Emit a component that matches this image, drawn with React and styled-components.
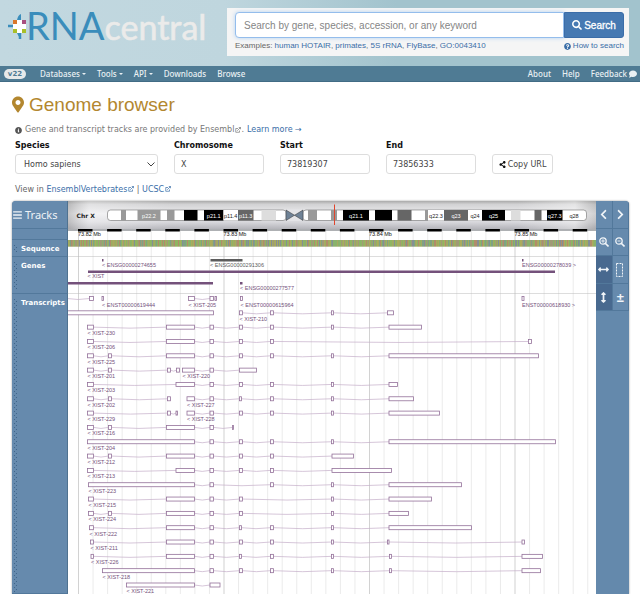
import React from "react";
import styled, { createGlobalStyle } from "styled-components";
import {
  FaSearch, FaQuestionCircle, FaInfoCircle, FaComment,
  FaMapMarkerAlt, FaShareAlt, FaBars, FaChevronLeft, FaChevronRight, FaArrowsAltH, FaArrowsAltV,
} from "react-icons/fa";

const GlobalStyle = createGlobalStyle`
  * { box-sizing: border-box; }
  body {
    margin: 0;
    background: #fff;
    color: #666;
    font-family: "DejaVu Sans", sans-serif;
    font-size: 8px;
  }
  a { color: #3a6ea8; text-decoration: none; }
`;

const sans = `"Liberation Sans", Arial, sans-serif`;

/* ---------- header ---------- */

const Header = styled.header`
  display: flex;
  justify-content: space-between;
  align-items: flex-start;
  height: 66px;
  padding: 8px 11px 0 7px;
  background: linear-gradient(90deg, #c2d8e0 0%, #bfd6de 35%, #a2c3cd 62%, #a2c3cd 100%);
`;

const Logo = styled.a`
  display: flex;
  align-items: flex-start;
  font-family: Lato, sans-serif;
  font-size: 38px;
  line-height: 34px;
  color: #3a8dbb;
`;

const LogoMark = styled.svg`
  width: 19px;
  height: 26px;
  margin-top: 5px;
`;

const LogoText = styled.span`
  white-space: nowrap;
`;

const Pale = styled.span`
  color: #ebebea;
  font-size: 34px;
  -webkit-text-stroke: 0.6px #ebebea;
`;

const SearchPanel = styled.form`
  width: 402px;
  height: 48px;
  padding: 4px 5px 0 8px;
  background: #f5f5f5;
  font-family: ${sans};
`;

const SearchBar = styled.div`
  display: flex;
  height: 26px;
`;

const SearchInput = styled.input`
  flex: 1;
  min-width: 0;
  padding: 0 8px;
  border: 1px solid #94bdec;
  border-radius: 4px 0 0 4px;
  box-shadow: 0 0 4px #b5d3f2;
  background: #fff;
  font: 10px ${sans};
  outline: none;
  &::placeholder { color: #858585; opacity: 1; }
`;

const SearchButton = styled.button`
  display: flex;
  align-items: center;
  justify-content: center;
  gap: 2px;
  width: 60px;
  padding: 0;
  border: 1px solid #3b6da8;
  border-radius: 0 3px 3px 0;
  background: #4679b2;
  color: #fff;
  font: 10px ${sans};
  -webkit-text-stroke: 0.3px #fff;
`;

const Examples = styled.div`
  display: flex;
  justify-content: space-between;
  margin-top: 3px;
  line-height: 10px;
  font-size: 8px;
`;

const IconLink = styled.a`
  display: flex;
  align-items: center;
  gap: 2px;
`;

const Nav = styled.nav`
  display: flex;
  align-items: center;
  height: 16px;
  padding: 0 3px 0 4px;
  background: #4f7b94;
  border-bottom: 1px solid #416c85;
  font-family: "Noto Sans", sans-serif;
`;

const Version = styled.a`
  width: 22px;
  margin-right: 14px;
  border-radius: 6px;
  background: #e6e9ea;
  color: #4f7b94;
  font: bold 7px/10px "DejaVu Sans", sans-serif;
  text-align: center;
`;

const NavLink = styled.a`
  display: flex;
  align-items: center;
  gap: 2px;
  margin-right: 11px;
  color: #e9f0f3;
  font-size: 8px;
  font-weight: 500;
  &:last-child { margin-right: 0; }
`;

const Caret = styled.i`
  border: 2px solid transparent;
  border-top-color: #e9f0f3;
  border-bottom: 0;
`;

const Spacer = styled.span`
  flex: 1;
`;

/* ---------- page ---------- */

const Page = styled.main`
  padding: 11px 11px 0 12px;
`;

const Title = styled.h1`
  display: flex;
  align-items: center;
  gap: 5px;
  margin: 0;
  color: #b3872f;
  font: 19px/23px ${sans};
  & svg { width: 12px; height: 17px; }
`;

const Info = styled.p`
  display: flex;
  align-items: center;
  margin: 9px 0 0 3px;
  line-height: 10px;
  color: #777;
  & > svg:first-child { margin-right: 3px; color: #555; }
  & > a { margin-left: 3px; }
`;

const ExtIcon = styled.svg`
  width: 6px;
  height: 6px;
  margin: 0 0 0 1px;
`;

const Form = styled.form`
  display: flex;
  align-items: flex-end;
  gap: 16px;
  margin: 6px 0 0 3px;
`;

const Field = styled.label`
  display: flex;
  flex-direction: column;
  gap: 3px;
  width: ${(p) => (p.$wide ? "143px" : "90px")};
  color: #111;
  font-weight: bold;
  line-height: 10px;
`;

const control = `
  height: 20px;
  width: 100%;
  border: 1px solid #ddd;
  border-radius: 3px;
  background: #fff;
  color: #444;
  font: 8px "DejaVu Sans", sans-serif;
`;

const Input = styled.input`
  ${control}
  padding: 0 6px;
`;

const SelectBox = styled.span`
  display: grid;
  align-items: center;
  & > * { grid-area: 1 / 1; }
  & > svg { justify-self: end; width: 8px; height: 5px; margin-right: 3px; pointer-events: none; }
`;

const Select = styled.select`
  ${control}
  appearance: none;
  padding: 0 8px;
`;

const CopyButton = styled.button`
  ${control}
  display: flex;
  align-items: center;
  justify-content: center;
  gap: 2px;
  width: 61px;
  padding: 0;
  white-space: nowrap;
  & svg { color: #111; }
`;

const ViewIn = styled.p`
  margin: 11px 0 0 3px;
  line-height: 10px;
`;

/* ---------- genome browser ---------- */

const Browser = styled.section`
  display: grid;
  grid-template-columns: 1fr 33px;
  margin-top: 6px;
  border-radius: 4px 4px 0 0;
  overflow: hidden;
  background: #6489ac;
  box-shadow: 0 0 2px #888;
`;

const Tracks = styled.div`
  min-width: 0;
`;

const TrackRow = styled.div`
  display: grid;
  grid-template-columns: 56px 1fr;
`;

const TrackLabel = styled.div`
  display: flex;
  padding: 5px 0 0 2px;
  border-bottom: 1px solid #52789b;
  border-right: 1px solid #4f7290;
  background: #668aad;
  color: #fff;
  font: bold 7px/8px "DejaVu Sans", sans-serif;
`;

const TracksButton = styled.button`
  display: flex;
  align-items: center;
  gap: 3px;
  padding: 0 0 0 1px;
  border: 0;
  border-right: 1px solid #4f7290;
  border-bottom: 1px solid #52789b;
  background: #668aad;
  color: #eef2f6;
  font: 11px "Noto Sans", sans-serif;
  & svg { width: 9px; height: 10px; }
`;

const Grip = styled.i`
  width: 4px;
  height: ${(p) => p.$h};
  margin-right: 3px;
  background:
    conic-gradient(from 0deg at 1px 1px, transparent 270deg, #3f658a 0) 0 0 / 4px 4px,
    conic-gradient(from 0deg at 1px 1px, transparent 270deg, #3f658a 0) 2px 2px / 4px 4px;
`;

const Chart = styled.svg`
  display: block;
  width: 100%;
  height: auto;
  background: #fff;
  font: 11px ${sans};
`;

const Toolbar = styled.div`
  display: grid;
  grid-template-columns: 1fr 1fr;
  grid-template-rows: 28px 27px 28px 27px;
`;

const Tool = styled.button`
  display: flex;
  align-items: center;
  justify-content: center;
  padding: 0;
  border: 0;
  border-right: 1px solid #52789b;
  border-bottom: 1px solid #52789b;
  background: ${(p) => (p.$active ? "#48698f" : "#668aad")};
  color: #f0f4f8;
  font: bold 13px ${sans};
`;

/* Chart units: two per pixel at the narrowest layout, 1056 across. */
const W = 1056;
const PURPLE = "#74517b";

const BANDS = [
  [106, 116, "#999"], [139, 185, "#999", "p22.2"], [198, 213, "#999"], [232, 259, "#000"],
  [272, 311, "#000", "p21.1"], [311, 340, "#fff", "p11.4"], [340, 371, "#666", "p11.3"],
  [387, 416, "#ddd"], [480, 498, "#999"], [526, 538, "#999"], [550, 602, "#000", "q21.1"],
  [614, 648, "#000"], [659, 687, "#666"], [714, 720, "#999"], [720, 752, "#fff", "q22.3"],
  [752, 800, "#666", "q23"], [800, 828, "#fff", "q24"], [828, 874, "#000", "q25"],
  [886, 905, "#ddd"], [933, 947, "#666"], [958, 989, "#000", "q27.3"], [990, 1034, "none", "q28"],
];

function Ideogram() {
  return (
    <Chart viewBox={`0 0 ${W} 56`} role="img" aria-label="Chromosome X">
      <defs>
        <linearGradient id="metal" x1="0" y1="0" x2="0" y2="1">
          <stop offset="0" stopColor="#aaa" />
          <stop offset="0.12" stopColor="#d2d2d4" />
          <stop offset="0.45" stopColor="#ececee" />
          <stop offset="0.75" stopColor="#d8d8dc" />
          <stop offset="1" stopColor="#b4b4ba" />
        </linearGradient>
        <linearGradient id="edge">
          <stop offset="0" stopColor="#999" stopOpacity="0.45" />
          <stop offset="0.04" stopColor="#fff" stopOpacity="0.35" />
          <stop offset="0.2" stopColor="#fff" stopOpacity="0" />
          <stop offset="0.85" stopColor="#fff" stopOpacity="0" />
          <stop offset="0.96" stopColor="#fff" stopOpacity="0.4" />
          <stop offset="1" stopColor="#999" stopOpacity="0.35" />
        </linearGradient>
      </defs>
      <rect width={W} height="56" fill="url(#metal)" />
      <rect width={W} height="56" fill="url(#edge)" />
      <text x="17" y="33" fontFamily="DejaVu Sans" fontWeight="bold" fontSize="12" fill="#222">Chr X</text>
      <rect x="79" y="18" width="357" height="21" rx="6" fill="#fff" stroke="#555" />
      <rect x="470" y="18" width="567" height="21" rx="6" fill="#fff" stroke="#555" />
      {BANDS.map(([a, b, fill, label]) => (
        <g key={a}>
          <rect x={a} y="18" width={b - a} height="21" fill={fill} />
          {label && (
            <text x={(a + b) / 2} y="33" textAnchor="middle" fill={fill === "#fff" || fill === "none" ? "#222" : "#fff"}>{label}</text>
          )}
        </g>
      ))}
      <rect x="435" y="17" width="36" height="23" fill="#e4e4e7" />
      <path d="M436 18 L453 28.5 L436 39Z M470 18 L453 28.5 L470 39Z" fill="#6f8296" stroke="#333" />
      <path d="M533 7V48" stroke="#e0452c" strokeWidth="2" />
    </Chart>
  );
}

function Grid({ height }) {
  return (
    <g>
      {Array.from({ length: 36 }, (_, i) => (
        <rect key={i} x={20 + i * 29.1} y="0" width="2" height={height} fill={i % 10 ? "#ebebeb" : "#d2d2d2"} />
      ))}
    </g>
  );
}

function Ruler() {
  return (
    <Chart viewBox={`0 0 ${W} 22`} role="img" aria-label="Position ruler">
      <Grid height={22} />
      <rect width={W} height="4" fill="#aeb0b3" />
      {Array.from({ length: 18 }, (_, i) => (
        <rect key={i} x={20 + i * 58.2} y="0" width="29" height="5" fill="#000" />
      ))}
      {["73.82 Mb", "73.83 Mb", "73.84 Mb", "73.85 Mb"].map((t, i) => (
        <text key={t} x={20 + i * 291} y="14" fill="#111">{t}</text>
      ))}
    </Chart>
  );
}

const BASE_COLORS = ["#8cb860", "#a7a960", "#b8846a", "#78a08c", "#9cae5f", "#b0ab5a", "#86b46b", "#a3967a", "#8088a0"];

function Sequence() {
  let seed = 7;
  const bars = Array.from({ length: 528 }, () => {
    seed = (seed * 16807) % 2147483647;
    return BASE_COLORS[seed % BASE_COLORS.length];
  });
  return (
    <Chart viewBox={`0 0 ${W} 34`} role="img" aria-label="Sequence">
      <Grid height={34} />
      <rect width={W} height="13" fill="#98a86a" />
      {bars.map((c, i) => <rect key={i} x={i * 2} y="0" width="2" height="13" fill={c} opacity="0.8" />)}
      <rect y="33" width={W} height="1" fill="#bbb" />
    </Chart>
  );
}

function Genes() {
  return (
    <Chart viewBox={`0 0 ${W} 74`} role="img" aria-label="Genes">
      <Grid height={74} />
      <g fill={PURPLE}>
        <rect x="68" y="4" width="3" height="5" />
        <text x="68" y="20">&lt; ENSG00000274655</text>
        <rect x="40" y="27" width="934" height="5" />
        <text x="39" y="42">&lt; XIST</text>
        <rect x="0" y="50" width="290" height="5" />
        <rect x="344" y="50" width="5" height="5" />
        <text x="344" y="65">&lt; ENSG00000277577</text>
        <rect x="908" y="4" width="3" height="5" />
        <text x="908" y="20">ENSG00000278039 &gt;</text>
      </g>
      <g fill="#5c5c5c">
        <rect x="285" y="4" width="64" height="5" />
        <text x="284" y="20">&lt; ENSG00000291306</text>
      </g>
      <rect y="73" width={W} height="1" fill="#bbb" />
    </Chart>
  );
}

const A = [39, 51], B = [81, 87], C = [197, 253], C2 = [216, 253], D = [284, 291], E = [343, 349], F = [405, 411], G = [527, 531];
const T = [199, 205];

/* Each transcript: row number, exons as [start, end], label. */
const TRANSCRIPTS = [
  [0, [[-9, -2], [43, 51]]],
  [0, [[68, 71]], "< ENST00000619444"],
  [0, [[241, 253], D, [294, 297]], "< XIST-205"],
  [0, [[345, 349]], "< ENST00000615964"],
  [0, [[908, 912]], "ENST00000618930 >"],
  [1, [[-9, 291]]],
  [1, [E, F, G, [639, 651]], "< XIST-210"],
  [2, [A, C, D, E, F, G, [642, 707]], "< XIST-230"],
  [3, [A, C, D, E, F, [921, 927]], "< XIST-206"],
  [4, [A, B, C, D, E, F, G, [642, 941]], "< XIST-225"],
  [5, [A, B, T, [217, 223]], "< XIST-201"],
  [5, [[229, 253], D, [343, 377]], "< XIST-220"],
  [6, [A, C2, D, E, F, G, [642, 659]], "< XIST-203"],
  [7, [A, B, T], "< XIST-202"],
  [7, [[238, 253], D, [343, 347], F, G, [642, 691]], "< XIST-227"],
  [8, [A, T, [216, 219]], "< XIST-229"],
  [8, [[238, 253], D, E, F, G, [642, 743]], "< XIST-228"],
  [9, [A, B, C, D, [329, 331]], "< XIST-216"],
  [10, [[39, 253], D, E, F, G, [642, 975]], "< XIST-204"],
  [11, [A, B, C, D, E, F, [528, 571]], "< XIST-212"],
  [12, [A, C2, D, E, F, [528, 647]], "< XIST-213"],
  [13, [[41, 253], D, F, G, [642, 787]], "< XIST-223"],
  [14, [[41, 51], C, D, E, G, [642, 727]], "< XIST-215"],
  [15, [[41, 51], B, C, D, E, G, [642, 681]], "< XIST-224"],
  [16, [[43, 51], C, D, [343, 347], F, G, [642, 807]], "< XIST-222"],
  [17, [[45, 51], C, D, E, F, G, [639, 642], [908, 913]], "< XIST-211"],
  [18, [[46, 51], C, D, [343, 347], F, G, [643, 647], [908, 949]], "< XIST-226"],
  [19, [[69, 253], D, E, F, G, [643, 647], [908, 945]], "< XIST-218"],
  [20, [[117, 253], [284, 304]], "< XIST-221"],
];

function Transcripts() {
  return (
    <Chart viewBox={`0 0 ${W} 600`} role="img" aria-label="Transcripts">
      <Grid height={600} />
      {TRANSCRIPTS.map(([row, exons, label], k) => {
        const y = 9 + row * 28.65;
        return (
          <g key={k}>
            {exons.slice(1).map(([x], i) => {
              const from = exons[i][1];
              return <path key={x} d={`M${from} ${y}Q${(from + x) / 2} ${y + 4} ${x} ${y}`} fill="none" stroke="#c4adc8" strokeWidth="1.4" />;
            })}
            {exons.map(([a, b]) => (
              <rect key={a} x={a} y={y - 4} width={b - a} height="8" fill="#fff" stroke="#937099" strokeWidth="1.6" />
            ))}
            {label && <text x={exons[0][0]} y={y + 16} fill={PURPLE}>{label}</text>}
          </g>
        );
      })}
    </Chart>
  );
}

function External() {
  return (
    <ExtIcon viewBox="0 0 12 12" fill="none" stroke="currentColor" strokeWidth="1.4" aria-hidden="true">
      <path d="M6 3H1.5v7.5H9V7M4.5 7.5L11 1M7.5 1H11v3.5" />
    </ExtIcon>
  );
}

function Lens({ plus }) {
  return (
    <svg width="10" height="10" viewBox="0 0 20 20" fill="none" stroke="currentColor" strokeWidth="2.6" aria-hidden="true">
      <circle cx="8" cy="8" r="6.4" />
      <path d="M12.5 12.5L19 19" strokeWidth="3.2" />
      <path d={plus ? "M4.5 8h7M8 4.5v7" : "M5 8h6"} strokeWidth="1.8" />
    </svg>
  );
}

export default function App() {
  return (
    <>
      <GlobalStyle />
      <Header>
        <Logo href="#" aria-label="RNAcentral">
          <LogoMark viewBox="0 0 19 26" aria-hidden="true">
            <path d="M1 13H6M13 20V26" stroke="#3a8dbb" strokeWidth="2.5" />
            <path d="M10 7Q11 2 14 1V7ZM10 20Q12 25 14 25V19Z" fill="#3a8dbb" />
            <path d="M10 7h5v13h-5zM6 11h13v5H6z" fill="#fff" />
            <path d="M6 7h4v4H6z" fill="#d9772b" />
            <path d="M15 7h4v4h-4z" fill="#a94f7e" />
            <path d="M6 16h4v4H6zM15 16h4v4h-4z" fill="#a9bf28" />
          </LogoMark>
          <LogoText>RNA<Pale>central</Pale></LogoText>
        </Logo>
        <SearchPanel onSubmit={(e) => e.preventDefault()}>
          <SearchBar>
            <SearchInput aria-label="Search" placeholder="Search by gene, species, accession, or any keyword" />
            <SearchButton><FaSearch />Search</SearchButton>
          </SearchBar>
          <Examples>
            <span>
              Examples: <a href="#">human HOTAIR</a>, <a href="#">primates</a>, <a href="#">5S rRNA</a>, <a href="#">FlyBase</a>, <a href="#">GO:0043410</a>
            </span>
            <IconLink href="#"><FaQuestionCircle size={7} />How to search</IconLink>
          </Examples>
        </SearchPanel>
      </Header>
      <Nav>
        <Version href="#">v22</Version>
        <NavLink href="#">Databases <Caret /></NavLink>
        <NavLink href="#">Tools<Caret /></NavLink>
        <NavLink href="#">API<Caret /></NavLink>
        <NavLink href="#">Downloads</NavLink>
        <NavLink href="#">Browse</NavLink>
        <Spacer />
        <NavLink href="#">About</NavLink>
        <NavLink href="#">Help</NavLink>
        <NavLink href="#">Feedback <FaComment /></NavLink>
      </Nav>
      <Page>
        <Title><FaMapMarkerAlt />Genome browser</Title>
        <Info>
          <FaInfoCircle size={7} />Gene and transcript tracks are provided by Ensembl<External />. <a href="#">Learn more →</a>
        </Info>
        <Form onSubmit={(e) => e.preventDefault()}>
          <Field $wide>
            Species
            <SelectBox>
              <Select defaultValue="Homo sapiens"><option>Homo sapiens</option></Select>
              <svg viewBox="0 0 8 5" fill="none" stroke="#444"><path d="M0.5 0.5L4 4L7.5 0.5" /></svg>
            </SelectBox>
          </Field>
          <Field>Chromosome<Input defaultValue="X" /></Field>
          <Field>Start<Input defaultValue="73819307" /></Field>
          <Field>End<Input defaultValue="73856333" /></Field>
          <CopyButton type="button"><FaShareAlt size={7} />Copy URL</CopyButton>
        </Form>
        <ViewIn>
          View in <a href="#">EnsemblVertebrates<External /></a> | <a href="#">UCSC<External /></a>
        </ViewIn>
        <Browser>
          <Tracks>
            <TrackRow><TracksButton><FaBars />Tracks</TracksButton><Ideogram /></TrackRow>
            <TrackRow><TrackLabel /><Ruler /></TrackRow>
            <TrackRow><TrackLabel><Grip $h="8px" />Sequence</TrackLabel><Sequence /></TrackRow>
            <TrackRow><TrackLabel><Grip $h="28px" />Genes</TrackLabel><Genes /></TrackRow>
            <TrackRow><TrackLabel><Grip $h="100%" />Transcripts</TrackLabel><Transcripts /></TrackRow>
          </Tracks>
          <Toolbar>
            <Tool aria-label="Scroll left"><FaChevronLeft size={11} /></Tool>
            <Tool aria-label="Scroll right"><FaChevronRight size={11} /></Tool>
            <Tool aria-label="Zoom in"><Lens plus /></Tool>
            <Tool aria-label="Zoom out"><Lens /></Tool>
            <Tool aria-label="Drag" $active><FaArrowsAltH size={11} /></Tool>
            <Tool aria-label="Select region">
              <svg width="8" height="14" viewBox="0 0 8 14" fill="none" stroke="#f0f4f8" strokeDasharray="2 1"><path d="M0.5 0.5h6v13h-6z" /></svg>
            </Tool>
            <Tool aria-label="Auto height" $active><FaArrowsAltV size={11} /></Tool>
            <Tool aria-label="Resize tracks">±</Tool>
          </Toolbar>
        </Browser>
      </Page>
    </>
  );
}
